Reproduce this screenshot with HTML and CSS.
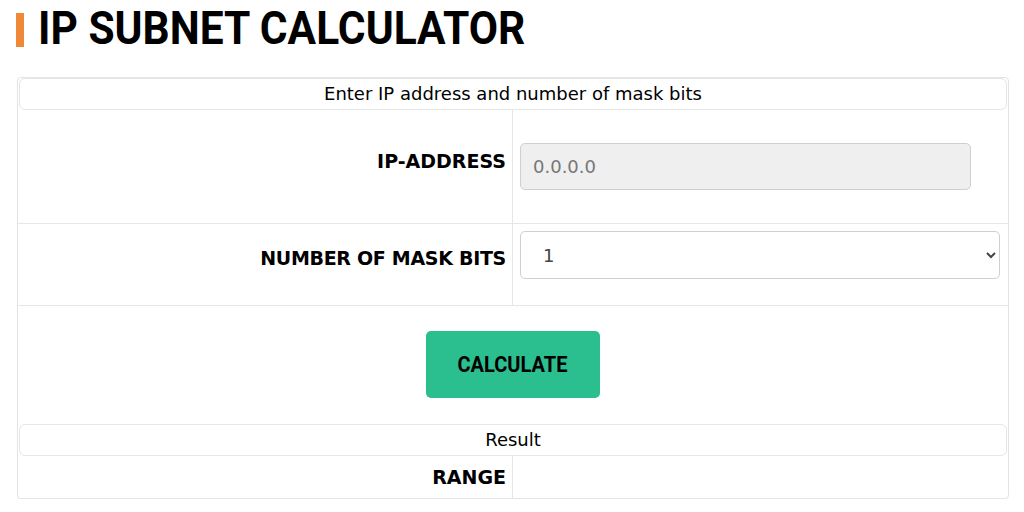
FILE: index.html
```html
<!DOCTYPE html>
<html lang="en">
<head>
  <meta charset="UTF-8" />
  <title>IP Subnet Calculator</title>
  <link rel="stylesheet" href="styles.css">
</head>
<body>
  <h1 class="title"><span class="title-text">IP SUBNET CALCULATOR</span></h1>

  <div class="calc">
    <div class="caption">Enter IP address and number of mask bits</div>
    <div class="row row-ip">
      <div class="label">IP-ADDRESS</div>
      <div class="field">
        <input type="text" class="ip-input" placeholder="0.0.0.0" disabled />
      </div>
    </div>
    <div class="row row-bits">
      <div class="label">NUMBER OF MASK BITS</div>
      <div class="field">
        <select class="bits-select">
          <option>1</option>
        </select>
      </div>
    </div>
    <div class="row-button">
      <button class="btn-calc"><span class="btn-text">CALCULATE</span></button>
    </div>
    <div class="caption">Result</div>
    <div class="row row-range">
      <div class="label">RANGE</div>
      <div class="field"></div>
    </div>
  </div>
</body>
</html>
```

FILE: styles.css
```css
body {
  margin: 0;
  padding: 0 16px;
  font-family: "DejaVu Sans", Tahoma, sans-serif;
  color: #000;
  background: #fff;
}
.title {
  font-family: Roboto, sans-serif;
  font-weight: 700;
  font-size: 46px;
  height: 34px;
  line-height: 30px;
  margin: 13px 0 30px 0;
  padding-left: 14px;
  border-left: 8px solid #f0883a;
}
.title-text {
  display: inline-block;
  transform: scaleX(0.924);
  transform-origin: left center;
}
.calc {
  width: 990px;
  margin-left: 1px;
  border: 1px solid #e4e4e4;
  border-radius: 4px;
  box-shadow: 0 1px 1px #eee;
}
.caption {
  height: 30px;
  line-height: 30px;
  text-align: center;
  font-size: 18px;
  border: 1px solid #e6e6e6;
  border-radius: 6px;
  margin: 0 1px;
}
.row {
  display: grid;
  grid-template-columns: 495px 1fr;
  border-bottom: 1px solid #e6e6e6;
}
.row .label {
  display: flex;
  align-items: center;
  justify-content: flex-end;
  padding-right: 6px;
  font-weight: 700;
  font-size: 19px;
  border-right: 1px solid #e6e6e6;
}
.row .field {
  display: flex;
  align-items: center;
  padding-left: 7px;
}
.row-ip {
  height: 113px;
}
.row-ip .label {
  align-items: flex-start;
  padding-top: 40px;
}
.row-ip .field {
  align-items: flex-start;
  padding-top: 33px;
}
.ip-input {
  width: 451px;
  height: 47px;
  box-sizing: border-box;
  background: #efefef;
  border: 1px solid #cfcfcf;
  border-radius: 5px;
  padding: 0 12px;
  font-family: "DejaVu Sans", sans-serif;
  font-size: 18px;
}
.ip-input::placeholder {
  color: #777;
}
.row-bits {
  height: 81px;
}
.row-bits .label {
  align-items: flex-start;
  padding-top: 23px;
  letter-spacing: -0.3px;
}
.row-bits .field {
  align-items: flex-start;
  padding-top: 7px;
}
.bits-select {
  width: 480px;
  height: 48px;
  box-sizing: border-box;
  background: #fff;
  border: 1px solid #cfcfcf;
  border-radius: 5px;
  padding: 0 18px;
  font-family: "DejaVu Sans", sans-serif;
  font-size: 18px;
  color: #444;
}
.row-button {
  height: 118px;
  display: flex;
  justify-content: center;
  align-items: flex-start;
  padding-top: 25px;
  box-sizing: border-box;
}
.btn-calc {
  width: 174px;
  height: 67px;
  margin-right: 1px;
  background: #2bbf8f;
  border: none;
  border-radius: 5px;
  font-family: Roboto, sans-serif;
  font-weight: 700;
  font-size: 22px;
  color: #000;
}
.btn-text {
  display: inline-block;
  transform: scaleX(0.91);
}
.row-range {
  height: 42px;
  border-bottom: none;
}
```
